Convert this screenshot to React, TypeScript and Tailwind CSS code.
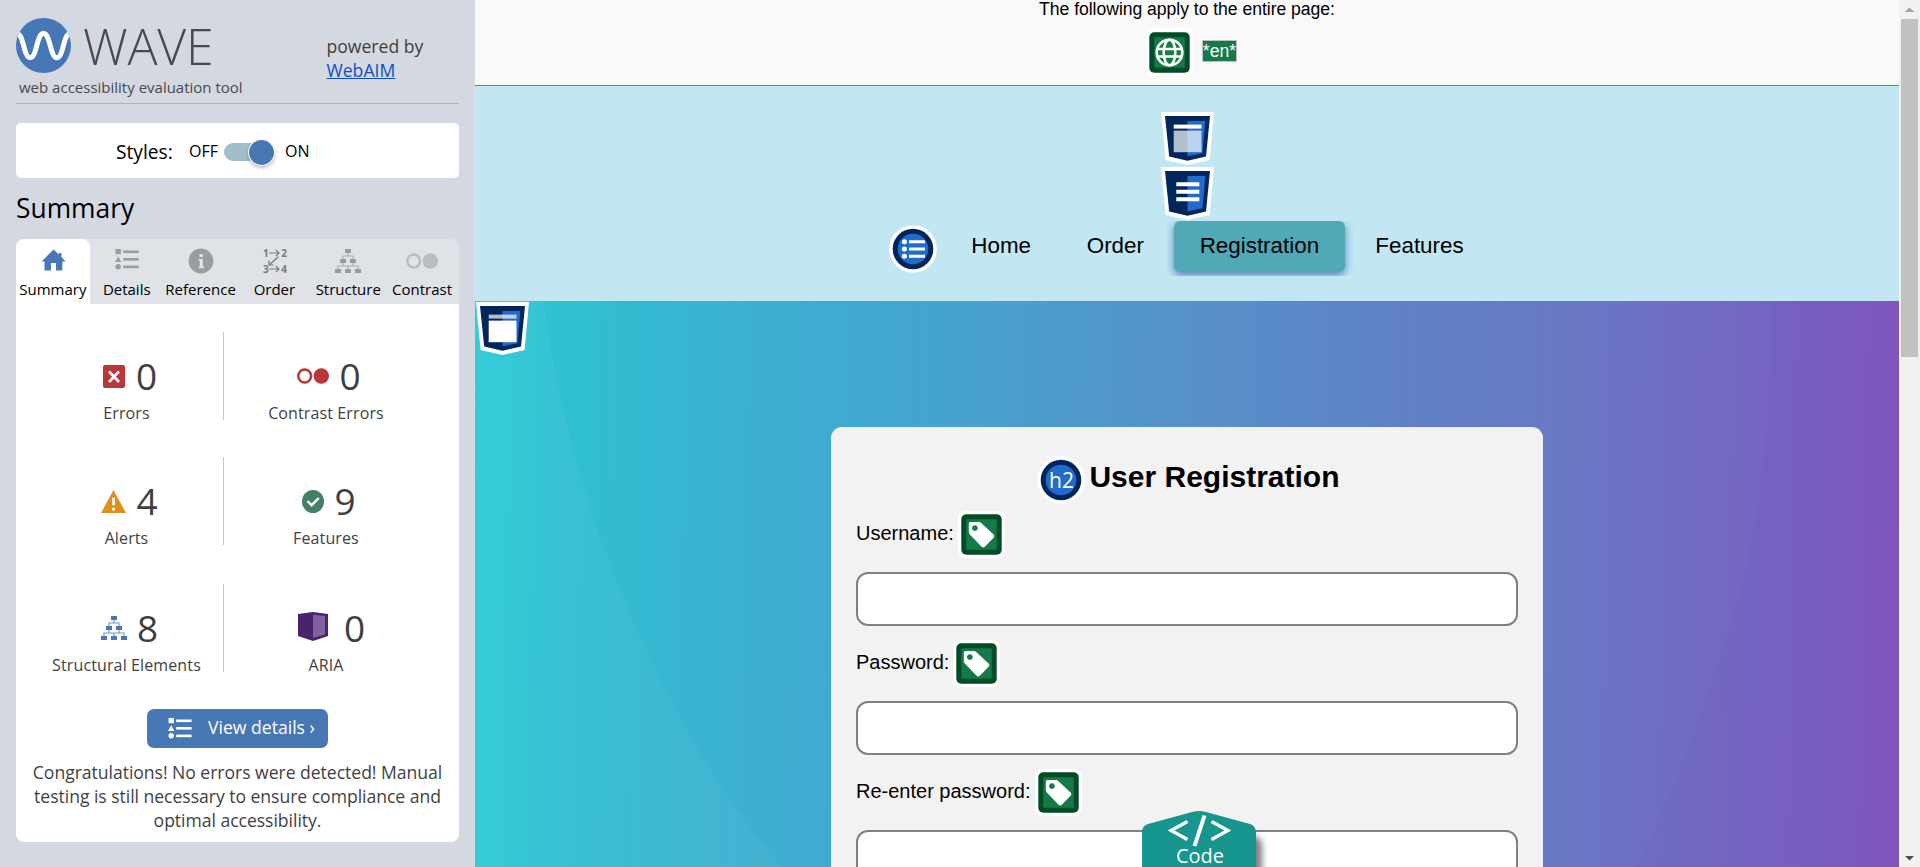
import type { ReactNode } from "react";

const Dots = ({ color }: { color: string }) => (
  <svg width="32" height="16" viewBox="0 0 32 16">
    <circle cx="7.7" cy="8" r="6.4" fill="none" stroke={color} strokeWidth="2.5" />
    <circle cx="24.3" cy="8" r="7.7" fill={color} />
  </svg>
);

const ListIcon = () => (
  <svg width="24" height="21" viewBox="0 0 24 21" fill="currentColor">
    <rect x="0.5" y="0" width="5.4" height="5.2" />
    <path d="M3.2 7.3 6.3 13H0Z" />
    <circle cx="3.2" cy="17.8" r="2.7" />
    <rect x="8.2" y="1.5" width="15.4" height="2.6" />
    <rect x="8.2" y="9" width="15.4" height="2.6" />
    <rect x="8.2" y="16.6" width="15.4" height="2.6" />
  </svg>
);

const TreeIcon = () => (
  <svg width="26" height="24" viewBox="0 0 26 24" fill="currentColor">
    <rect x="10" y="0" width="6" height="4" />
    <rect x="5" y="10" width="6" height="4" />
    <rect x="15" y="10" width="6" height="4" />
    <rect x="0" y="20" width="6" height="4" />
    <rect x="10" y="20" width="6" height="4" />
    <rect x="20" y="20" width="6" height="4" />
    <path
      d="M13 4v3M8 10V7h10v3M8 14v3M18 14v3M3 20v-3h20v3M13 17v3"
      fill="none"
      stroke="currentColor"
      strokeWidth="1.2"
      opacity="0.75"
    />
  </svg>
);

const HomeIcon = () => (
  <svg width="25" height="22" viewBox="0 0 25 22" fill="#4877b6" className="mb-[3px] ml-[1px]">
    <path d="M12.5 0.5 18 5.600V4H20.500V8L24.5 12.5H21.300V21.5H15V14H10V21.5H3.500V12.5H0.500Z" />
  </svg>
);

const InfoIcon = () => (
  <svg width="26" height="26" viewBox="0 0 26 26">
    <circle cx="13" cy="13" r="12.4" fill="#9a9da0" />
    <rect x="11.4" y="6" width="3.4" height="3" fill="#dfe2e7" />
    <path d="M10.6 11H14.8v7.6h1.3v1.7h-5.5v-1.7h1.2V12.700h-1.2Z" fill="#dfe2e7" />
  </svg>
);

const OrderIcon = () => (
  <div className="ml-[1px] flex h-[30px] w-[24px] flex-col justify-between text-[10px] leading-[14px] font-bold text-[#77797b]">
    <div className="flex items-center justify-between">
      <span>1</span>
      <svg width="11" height="8" viewBox="0 0 11 8" fill="none" stroke="#77797b" strokeWidth="1.2">
        <path d="M0 4h10M6.800 0.800 10 4 6.800 7.200" />
      </svg>
      <span>2</span>
    </div>
    <svg width="24" height="10" viewBox="0 0 24 10" className="-my-[4px] shrink-0" fill="none" stroke="#77797b" strokeWidth="1.2">
      <path d="M15.500 0.800 6 9M6 4.500V9h4.600" />
    </svg>
    <div className="flex items-center justify-between">
      <span>3</span>
      <svg width="11" height="8" viewBox="0 0 11 8" fill="none" stroke="#77797b" strokeWidth="1.2">
        <path d="M0 4h10M6.800 0.800 10 4 6.800 7.200" />
      </svg>
      <span>4</span>
    </div>
  </div>
);

const tabs: { label: string; icon: ReactNode }[] = [
  { label: "Summary", icon: <HomeIcon /> },
  { label: "Details", icon: <span className="mb-[3px]"><ListIcon /></span> },
  { label: "Reference", icon: <InfoIcon /> },
  { label: "Order", icon: <OrderIcon /> },
  { label: "Structure", icon: <TreeIcon /> },
  { label: "Contrast", icon: <Dots color="#b9bcc0" /> },
];

const ErrorIcon = () => (
  <svg width="22" height="23" viewBox="0 0 22 23">
    <rect width="22" height="23" rx="2" fill="#ba3737" />
    <path d="M6 6.5 16 17M16 6.5 6 17" stroke="#fff" strokeWidth="2.6" />
  </svg>
);
const AlertIcon = () => (
  <svg width="25" height="23" viewBox="0 0 25 23">
    <path d="M12.5 0 25 23H0Z" fill="#e28f17" />
    <path d="M11.2 7.8h2.8v7.4h-2.8ZM11.2 17.8h2.8v2.8h-2.8Z" fill="#fff" />
  </svg>
);
const CheckIcon = () => (
  <svg width="22" height="23" viewBox="0 0 22 23">
    <ellipse cx="11" cy="11.5" rx="11" ry="11.5" fill="#458065" />
    <path d="M5.5 11.2 9.6 15.2 16.8 8" fill="none" stroke="#fff" strokeWidth="2.4" />
  </svg>
);
const AriaIcon = () => (
  <svg width="30" height="29" viewBox="0 0 30 29">
    <path d="M0 2 15 0 30 2V24L15 29 0 24Z" fill="#48246b" />
    <path d="M15 2.8 27 4V22.5L15 26Z" fill="#8260a0" />
  </svg>
);

const counts: { label: string; value: number; icon: ReactNode; row: string; pos: string }[] = [
  { label: "Errors", value: 0, icon: <ErrorIcon />, row: "gap-[11px] pl-[7px]", pos: "border-r" },
  { label: "Contrast Errors", value: 0, icon: <Dots color="#ba3737" />, row: "gap-[10px] pl-[6px]", pos: "" },
  { label: "Alerts", value: 4, icon: <AlertIcon />, row: "gap-[10px] pl-[6px]", pos: "border-r" },
  { label: "Features", value: 9, icon: <CheckIcon />, row: "gap-[10px] pl-[6px]", pos: "" },
  {
    label: "Structural Elements",
    value: 8,
    icon: <span className="text-[#4877b6]"><TreeIcon /></span>,
    row: "gap-[10px] pl-[6px]",
    pos: "border-r",
  },
  { label: "ARIA", value: 0, icon: <span className="-mt-[4px]"><AriaIcon /></span>, row: "gap-[16px] pl-[11px]", pos: "" },
];

const Shield = ({ children }: { children: ReactNode }) => (
  <svg width="53" height="53" viewBox="0 0 53 53" className="block shrink-0">
    <path d="M0 0H53L48.6 48 26.5 53 4.6 48Z" fill="#fff" />
    <path d="M4 4H49L45 44.6 26.5 48.8 8.2 44.6Z" fill="#00265c" />
    <path d="M26.5 9H44.3L41.5 41.2 26.5 44.2Z" fill="#206bcb" />
    {children}
  </svg>
);

const GreenBox = ({ children }: { children: ReactNode }) => (
  <svg width="47" height="47" viewBox="0 0 47 47" className="block shrink-0">
    <rect width="47" height="47" rx="8" fill="#fff" />
    <rect x="3.3" y="3.3" width="40.4" height="40.4" rx="5" fill="#004c26" />
    <rect x="8.3" y="8.3" width="30.4" height="30.4" rx="1" fill="#167a46" />
    {children}
  </svg>
);

const BlueRound = ({ children }: { children: ReactNode }) => (
  <svg width="48" height="48" viewBox="0 0 48 48" className="block shrink-0">
    <circle cx="24" cy="24" r="23.8" fill="#fff" />
    <circle cx="24" cy="24" r="20.3" fill="#00265c" />
    <circle cx="24" cy="24" r="15.3" fill="#206bcb" />
    {children}
  </svg>
);

const TagIcon = () => (
  <GreenBox>
    <path
      fillRule="evenodd"
      fill="#fff"
      d="M12.5 11H20.8Q22.2 11 23.2 12L35.6 23.6Q37.2 25.2 35.6 26.8L26.8 35.8Q25.2 37.4 23.6 35.8L11.8 23.4Q10.8 22.4 10.8 21V12.7Q10.8 11 12.5 11ZM16.9 14.2a2.9 2.9 0 1 0 0.01 0Z"
    />
  </GreenBox>
);

const Field = ({ label }: { label: string }) => (
  <div className="flex h-[129px] shrink-0 flex-col">
    <label className="flex h-[61px] items-start">
      <span className="mt-[12px] text-[20px] leading-[20px]">{label}</span>
      <span className="ml-[4px]"><TagIcon /></span>
    </label>
    <div className="h-[54px] rounded-[12px] border-2 border-[#808080] bg-white" />
  </div>
);

export default function App() {
  return (
    <div className="flex h-[867px] w-[1920px] overflow-hidden bg-white font-['Liberation_Sans',Arial,sans-serif] text-black">
      <aside className="flex w-[475px] shrink-0 flex-col bg-[#d4d8e0] px-4 font-['Open_Sans',sans-serif]">
        <header className="flex h-[104px] shrink-0 border-b border-[#b0b4b6] text-[#3f3f3f]">
          <div className="w-[310.5px] pt-[18px]">
            <div className="flex h-[55px]">
              <svg width="55" height="55" viewBox="0 0 55 55" className="shrink-0">
                <circle cx="27.5" cy="27.5" r="27.5" fill="#4877b6" />
                <path
                  d="M2.5 16.5C7.5 18 8 39.5 14 39.8C21 40 20.5 15.5 27.5 15.3C34.5 15.5 34 40 41 39.8C47 39.5 47.5 18 52.5 16.5"
                  fill="none"
                  stroke="#fff"
                  strokeWidth="5"
                />
              </svg>
              <span className="ml-[12px] pt-[1px] text-[50px] leading-[55px] font-light tracking-[-0.15px] text-[#4a4a4a]">WAVE</span>
            </div>
            <div className="mt-1 pl-[3px] text-[15px] leading-5 whitespace-nowrap text-[#4a4a4a]">web accessibility evaluation tool</div>
          </div>
          <div className="pt-[34px] text-[17.6px] leading-6">
            <div>powered by</div>
            <div className="text-[#0f50c8] underline">WebAIM</div>
          </div>
        </header>

        <div className="mt-[19px] flex h-[55px] shrink-0 items-center rounded-[5px] bg-white pt-[3px] pl-[100px]">
          <span className="w-[73px] text-[19.2px] leading-5">Styles:</span>
          <span className="w-[35px] pb-[3px] text-[16px] leading-5">OFF</span>
          <span className="mr-[11px] flex h-[18px] w-[50px] items-center justify-end rounded-full bg-[#9fc0ca]">
            <span className="size-[25px] shrink-0 rounded-full bg-[#4877b6] shadow-[0_0_0_1px_#ffffff,0_2px_4px_rgba(0,0,0,0.4)]" />
          </span>
          <span className="pb-[3px] text-[16px] leading-5">ON</span>
        </div>

        <h1 className="flex h-[61px] shrink-0 items-center pb-[1px] text-[26.4px] leading-8">Summary</h1>

        <nav className="grid h-[65px] shrink-0 grid-cols-6 rounded-t-[8px] bg-[#dfe2e7] text-[#9a9da0]">
          {tabs.map((t, i) => (
            <div
              key={t.label}
              className={i === 0 ? "flex flex-col items-center rounded-t-[8px] bg-white pt-[6px]" : "flex flex-col items-center pt-[6px]"}
            >
              <span className="flex h-8 items-center">{t.icon}</span>
              <span className="text-[15px] leading-6 text-black">{t.label}</span>
            </div>
          ))}
        </nav>

        <section className="flex h-[538px] shrink-0 flex-col rounded-b-[8px] bg-white pl-[14px] text-[#3f3f3f]">
          <div className="grid grid-cols-[194px_204px] grid-rows-[125px_127px_88px] pt-[28px]">
            {counts.map((c) => (
              <div key={c.label} className={`flex h-[88px] flex-col items-center border-[#c8c8c8] pt-[21px] ${c.pos}`}>
                <div className={`flex h-[46px] items-center ${c.row}`}>
                  {c.icon}
                  <span className="text-[37px] leading-[46px]">{c.value}</span>
                </div>
                <span className="mt-[2px] text-[16px] leading-[24px] tracking-[0.12px] whitespace-nowrap">{c.label}</span>
              </div>
            ))}
          </div>
          <div className="mr-[14px] flex flex-col items-center">
            <div className="mt-[37px] flex h-[39px] w-[181px] items-center rounded-[7px] bg-[#4877b6] pl-[21px] text-white">
              <ListIcon />
              <span className="ml-[16px] pb-[2px] text-[17.6px] whitespace-nowrap">View details ›</span>
            </div>
            <p className="mt-[12px] text-center text-[17.6px] leading-6 tracking-[-0.04px] whitespace-nowrap">
              Congratulations! No errors were detected! Manual
              <br />
              testing is still necessary to ensure compliance and
              <br />
              optimal accessibility.
            </p>
          </div>
        </section>
      </aside>

      <main className="relative flex w-[1424px] shrink-0 flex-col">
        <div className="flex h-[86px] shrink-0 flex-col items-center border-b border-[#71857b] bg-[#f9f9f9] text-[17.6px]">
          <div className="-mt-[1px] leading-5 tracking-[-0.04px]">The following apply to the entire page:</div>
          <div className="mt-[10px] flex items-start pl-[9px]">
            <GreenBox>
              <g fill="none" stroke="#fff" strokeWidth="2.6">
                <circle cx="23.5" cy="23.5" r="12.8" />
                <ellipse cx="23.5" cy="23.5" rx="5.8" ry="12.8" />
                <path d="M11.500 20h24M11.500 27.500h24" strokeWidth="2.4" />
              </g>
            </GreenBox>
            <span className="mt-[11px] ml-[9px] flex h-[22px] items-center border border-[#c0c0c0] bg-[#167a46] leading-5 text-white">*en*</span>
          </div>
        </div>

        <header className="flex h-[215px] shrink-0 flex-col items-center bg-[#c2e7f2] pt-[26px]">
          <Shield>
            <rect x="12.7" y="12.6" width="27.8" height="4" fill="#fff" />
            <rect x="12.7" y="18.6" width="27.8" height="21.6" fill="#fff" opacity="0.7" />
          </Shield>
          <div className="mt-[2px]">
            <Shield>
              <path d="M15.3 15.2h23v4h-23ZM15.3 22.8h23v4h-23ZM15.3 30.2h23v4h-23Z" fill="#fff" />
            </Shield>
          </div>
          <nav className="mt-[1px] flex h-[55px] items-start overflow-hidden pl-[4px] text-[22.4px] leading-[50px]">
            <div className="mt-[3.500px] mr-[9px]">
              <BlueRound>
                <g fill="#fff">
                  <circle cx="15.4" cy="16.8" r="2.5" />
                  <circle cx="15.4" cy="24" r="2.5" />
                  <circle cx="15.4" cy="31.2" r="2.5" />
                  <path d="M20 15.3h16v3H20ZM20 22.5h16v3H20ZM20 29.7h16v3H20Z" />
                </g>
              </BlueRound>
            </div>
            <span className="mr-[4.500px] px-[25.6px]">Home</span>
            <span className="mr-[4.500px] px-[25.6px]">Order</span>
            <span className="mr-[5px] h-[51px] rounded-[6px] bg-[#51a8b6] px-[25.6px] shadow-[0_3px_8px_rgba(40,90,170,0.75)]">Registration</span>
            <span className="px-[25.6px]">Features</span>
          </nav>
        </header>

        <section className="relative flex grow flex-col bg-[linear-gradient(91deg,#2dcbd7_0%,#2fc0d2_6%,#3cb0d1_19%,#44a4cf_32%,#5593ca_48%,#5e82c8_63%,#6879c5_75%,#7369c3_87%,#7a60c1_94%,#8057be_100%)]">
          <svg width="1424" height="566" viewBox="0 0 1424 566" className="absolute inset-0">
            <path d="M0 0H69C76 60 96 165 144 287C190 400 240 485 306 566H0Z" fill="#fff" opacity="0.04" />
            <path d="M1296 0C1298 110 1285 230 1258 315C1232 400 1205 480 1160 566H1424V0Z" fill="#6a2fa8" opacity="0.03" />
          </svg>
          <div className="relative flex h-[566px] flex-col overflow-hidden">
            <div className="flex h-[126px] shrink-0 pt-px pl-px">
              <Shield>
                <rect x="12.7" y="12.6" width="27.8" height="4" fill="#fff" opacity="0.7" />
                <rect x="12.7" y="18.6" width="27.8" height="21.6" fill="#fff" />
              </Shield>
            </div>
            <div className="ml-[356px] flex h-[600px] w-[712px] shrink-0 flex-col rounded-t-[11px] bg-[#f2f2f2] px-[25px] pt-[29px]">
              <div className="flex h-[55px] shrink-0 items-start justify-center pl-[3px]">
                <BlueRound>
                  <text x="24.500" y="31.500" textAnchor="middle" fontSize="21" fill="#fff" className="font-['Open_Sans',sans-serif]">h2</text>
                </BlueRound>
                <h2 className="ml-[4px] text-[30px] leading-[42px] font-bold">User Registration</h2>
              </div>
              <Field label="Username:" />
              <Field label="Password:" />
              <Field label="Re-enter password:" />
            </div>
          </div>
        </section>

        <div className="absolute bottom-0 left-[667px] flex h-[57px] w-[126px] overflow-hidden">
          <svg width="126" height="57" viewBox="0 0 126 57">
            <defs>
              <filter id="soft" x="-20%" y="-20%" width="140%" height="140%">
                <feGaussianBlur stdDeviation="3" />
              </filter>
            </defs>
            <path d="M20 28 60 18 112 26Q120 28 120 36V80H20Z" fill="#000" opacity="0.5" filter="url(#soft)" />
            <path d="M0 70V22Q0 16 6 14L50 2Q57 0 64 2L108 14Q114 16 114 23V70Z" fill="#17968f" />
            <path d="M45.500 11.500 29 20.500 45.500 29.500M69.500 11.500 86 20.500 69.500 29.500" fill="none" stroke="#fff" strokeWidth="3.2" />
            <path d="M62.500 5.500 52.500 36" fill="none" stroke="#fff" strokeWidth="4" />
            <text x="58" y="53" textAnchor="middle" fontSize="20" fill="#fff" className="font-['Open_Sans',sans-serif]">Code</text>
          </svg>
        </div>
      </main>

      <div className="flex w-[21px] shrink-0 flex-col items-center bg-[#f1f1f1]">
        <svg width="21" height="19" viewBox="0 0 21 19"><path d="M5.500 12 10.500 7.500 15.500 12Z" fill="#a3a3a3" /></svg>
        <div className="h-[338px] w-[17px] bg-[#c1c1c1]" />
        <svg width="21" height="19" viewBox="0 0 21 19" className="mt-auto"><path d="M6 8H15L10.500 12.500Z" fill="#505050" /></svg>
      </div>
    </div>
  );
}
